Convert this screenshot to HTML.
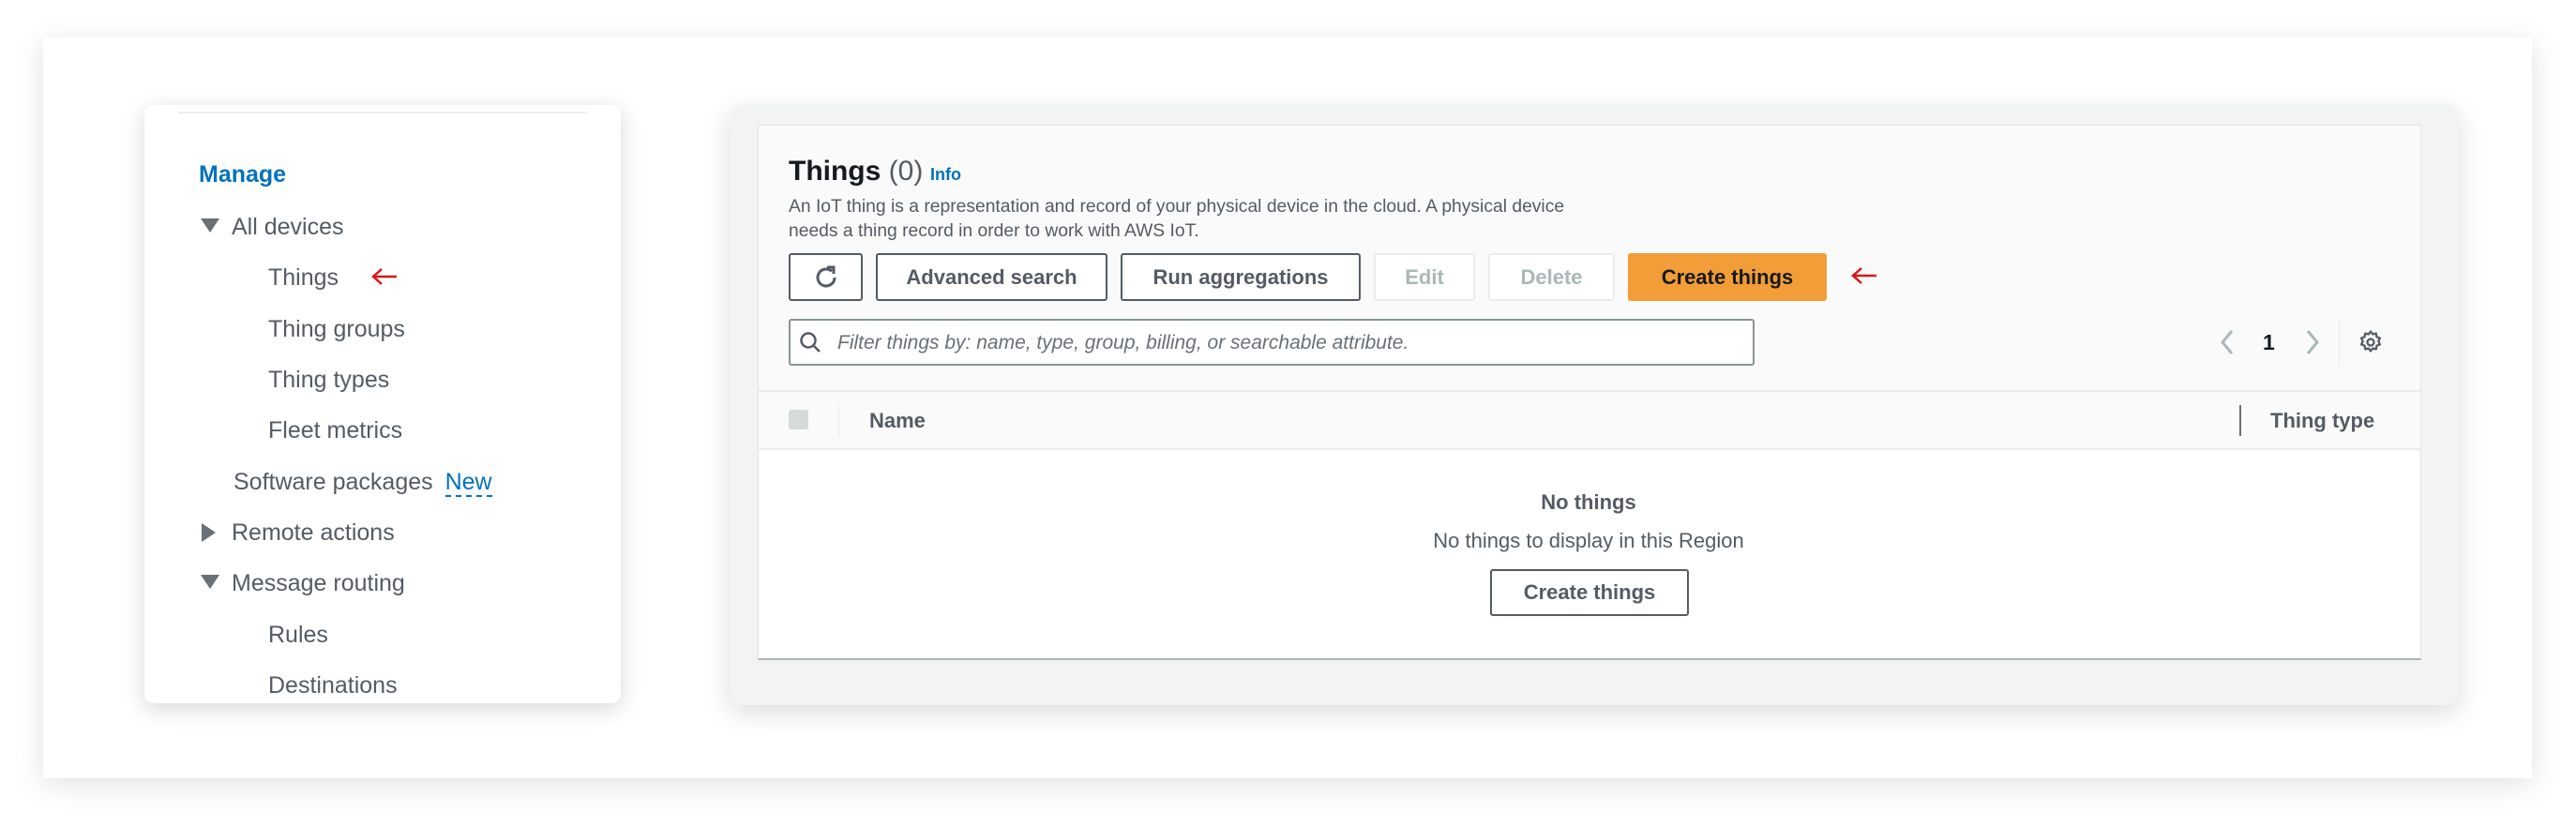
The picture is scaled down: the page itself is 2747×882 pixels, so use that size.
<!DOCTYPE html>
<html><head><meta charset="utf-8"><style>
*{box-sizing:border-box;margin:0;padding:0}
body{width:2747px;height:882px;background:#fff;position:relative;overflow:hidden;font-family:"Liberation Sans",sans-serif;color:#545b64}
.a{position:absolute;white-space:nowrap}
.card{position:absolute;left:46px;top:40px;width:2654px;height:790px;background:#fff;box-shadow:0 6px 30px rgba(0,0,0,.12)}
.side{position:absolute;left:154px;top:112px;width:508px;height:638px;background:#fff;border-radius:10px;box-shadow:0 6px 24px rgba(0,0,0,.16)}
.nav{font-size:25px;color:#545b64;line-height:30px}
.panel{position:absolute;left:778px;top:112px;width:1844px;height:640px;background:#f2f3f3;border-radius:12px;box-shadow:0 8px 28px rgba(0,0,0,.14)}
.inner{position:absolute;left:808px;top:133px;width:1774px;height:571px;background:#fafafa;border:1px solid #e1e4e4;border-bottom:2px solid #aab7b8}
.btn{position:absolute;top:270px;height:51px;border:2px solid #545b64;border-radius:3px;background:#fff;font-weight:bold;font-size:22px;color:#545b64;display:flex;align-items:center;justify-content:center}
.dis{border:2px solid #e9ebed;color:#aab7b8}
</style></head><body>
<div class="card"></div>
<div class="side"></div>
<div class="a" style="left:190px;top:119px;width:436px;height:2px;background:#eaeded"></div>
<div class="a nav" style="left:212px;top:171px;color:#0073bb;font-weight:bold">Manage</div>
<svg class="a" style="left:214px;top:233px" width="20" height="16"><path d="M0 0H20L10 15Z" fill="#687078"/></svg>
<div class="a nav" style="left:247px;top:227px">All devices</div>
<div class="a nav" style="left:286px;top:281px">Things</div>
<svg class="a" style="left:395px;top:285px" width="30" height="20"><path d="M28 10H3M12 2L3 10L12 18" stroke="#d91515" stroke-width="2.5" fill="none"/></svg>
<div class="a nav" style="left:286px;top:336px">Thing groups</div>
<div class="a nav" style="left:286px;top:390px">Thing types</div>
<div class="a nav" style="left:286px;top:444px">Fleet metrics</div>
<div class="a nav" style="left:249px;top:499px">Software packages <span style="color:#0073bb;border-bottom:2px dashed #0073bb;margin-left:6px">New</span></div>
<svg class="a" style="left:215px;top:558px" width="16" height="20"><path d="M0 0V20L15 10Z" fill="#687078"/></svg>
<div class="a nav" style="left:247px;top:553px">Remote actions</div>
<svg class="a" style="left:214px;top:613px" width="20" height="16"><path d="M0 0H20L10 15Z" fill="#687078"/></svg>
<div class="a nav" style="left:247px;top:607px">Message routing</div>
<div class="a nav" style="left:286px;top:662px">Rules</div>
<div class="a nav" style="left:286px;top:716px">Destinations</div>

<div class="panel"></div>
<div class="inner"></div>
<div class="a" style="left:809px;top:479px;width:1772px;height:223px;background:#fff"></div>
<div class="a" style="left:809px;top:416px;width:1772px;height:2px;background:#eaeded"></div>
<div class="a" style="left:809px;top:478px;width:1772px;height:2px;background:#eaeded"></div>

<div class="a" style="left:841px;top:166px;font-size:30px;font-weight:bold;color:#16191f">Things <span style="font-weight:normal;color:#545b64">(0)</span></div>
<div class="a" style="left:992px;top:176px;font-size:18px;font-weight:bold;color:#0073bb">Info</div>
<div class="a" style="left:841px;top:208px;font-size:19.3px;line-height:26px;color:#545b64">An IoT thing is a representation and record of your physical device in the cloud. A physical device<br>needs a thing record in order to work with AWS IoT.</div>

<div class="btn" style="left:841px;width:79px"><svg width="30" height="30" viewBox="0 0 30 30"><path d="M24 15a9 9 0 1 1-3-6.7" stroke="#545b64" stroke-width="3" fill="none"/><path d="M16 4h7v7" stroke="#545b64" stroke-width="3" fill="none"/></svg></div>
<div class="btn" style="left:934px;width:247px">Advanced search</div>
<div class="btn" style="left:1195px;width:256px">Run aggregations</div>
<div class="btn dis" style="left:1465px;width:108px">Edit</div>
<div class="btn dis" style="left:1587px;width:135px">Delete</div>
<div class="btn" style="left:1736px;width:212px;background:#f29d38;border-color:#f29d38;color:#16191f">Create things</div>
<svg class="a" style="left:1973px;top:284px" width="30" height="20"><path d="M28 10H3M12 2L3 10L12 18" stroke="#d91515" stroke-width="2.5" fill="none"/></svg>

<div class="a" style="left:841px;top:340px;width:1030px;height:50px;background:#fff;border:2px solid #879596;border-radius:3px"></div>
<svg class="a" style="left:852px;top:353px" width="26" height="26"><circle cx="10" cy="10" r="7.5" stroke="#545b64" stroke-width="2.5" fill="none"/><path d="M15.5 15.5L22 22" stroke="#545b64" stroke-width="2.5"/></svg>
<div class="a" style="left:893px;top:354px;font-size:21px;font-style:italic;color:#687078">Filter things by: name, type, group, billing, or searchable attribute.</div>

<svg class="a" style="left:2364px;top:350px" width="22" height="30"><path d="M16 3L6 15L16 27" stroke="#aab7b8" stroke-width="3" fill="none"/></svg>
<div class="a" style="left:2413px;top:352px;font-size:23px;font-weight:bold;color:#16191f">1</div>
<svg class="a" style="left:2455px;top:350px" width="22" height="30"><path d="M6 3L16 15L6 27" stroke="#aab7b8" stroke-width="3" fill="none"/></svg>
<div class="a" style="left:2494px;top:340px;width:1px;height:50px;background:#eaeded"></div>
<svg class="a" style="left:2514px;top:351px" width="28" height="28" viewBox="0 0 28 28"><path d="M14 2.5l2.2 3 3.6-.9.6 3.7 3.5 1.3-1.6 3.4 1.6 3.4-3.5 1.3-.6 3.7-3.6-.9-2.2 3-2.2-3-3.6.9-.6-3.7-3.5-1.3L5.7 13 4.1 9.6l3.5-1.3.6-3.7 3.6.9z" stroke="#545b64" stroke-width="2.3" fill="none" stroke-linejoin="round"/><circle cx="14" cy="14" r="3.5" stroke="#545b64" stroke-width="2.3" fill="none"/></svg>

<div class="a" style="left:841px;top:437px;width:21px;height:21px;background:#d5dbdb;border-radius:3px"></div>
<div class="a" style="left:894px;top:432px;width:1px;height:34px;background:#eaeded"></div>
<div class="a" style="left:927px;top:436px;font-size:22px;font-weight:bold;color:#545b64">Name</div>
<div class="a" style="left:2388px;top:432px;width:2px;height:33px;background:#687078"></div>
<div class="a" style="left:2421px;top:436px;font-size:22px;font-weight:bold;color:#545b64">Thing type</div>

<div class="a" style="left:1494px;top:523px;width:400px;text-align:center;font-size:22px;font-weight:bold;color:#545b64">No things</div>
<div class="a" style="left:1494px;top:564px;width:400px;text-align:center;font-size:22px;color:#545b64">No things to display in this Region</div>
<div class="btn" style="left:1589px;top:607px;width:212px;height:50px;border-width:2px">Create things</div>
</body></html>
